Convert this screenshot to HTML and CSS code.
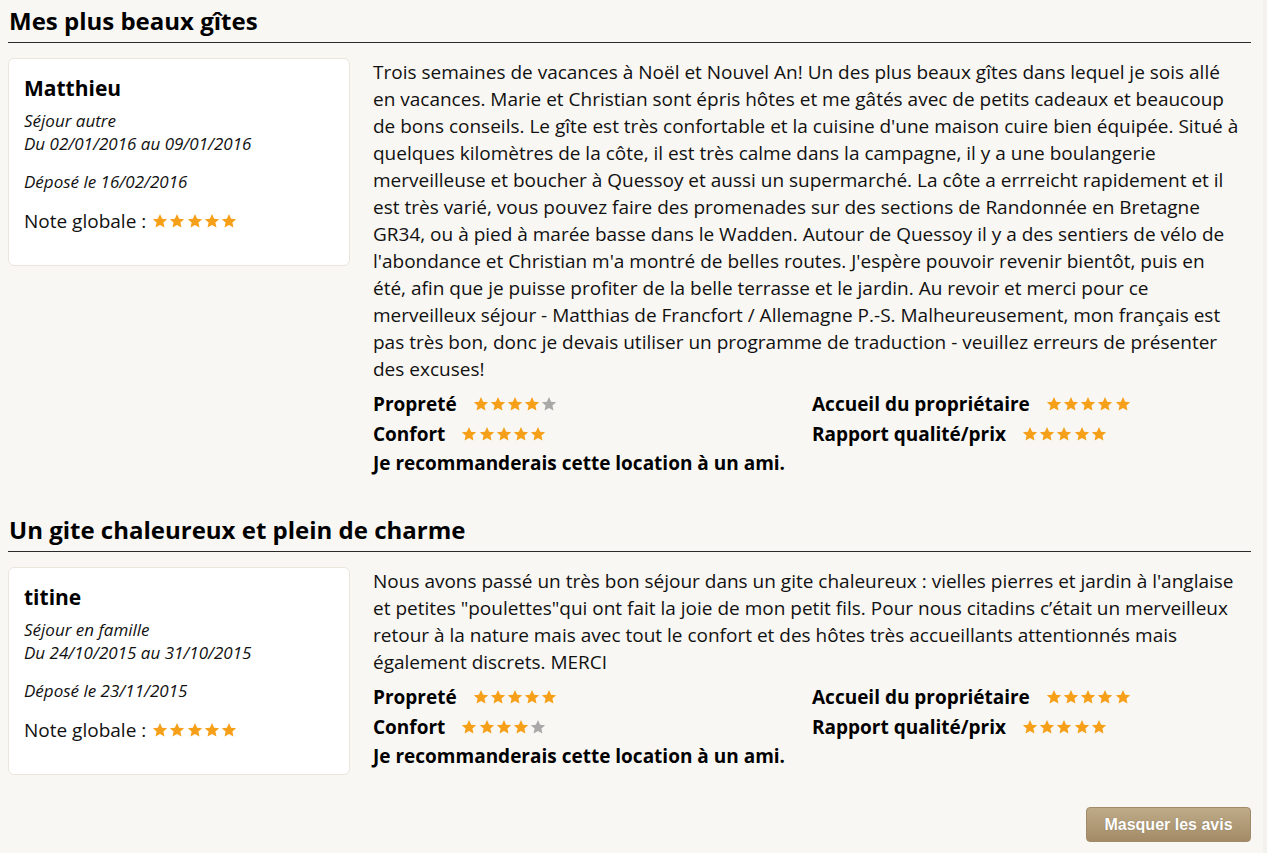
FILE: index.html
```html
<!DOCTYPE html>
<html lang="fr">
<head>
<meta charset="utf-8">
<title>Avis</title>
<link rel="stylesheet" href="styles.css">
</head>
<body>
<svg width="0" height="0" class="defs" aria-hidden="true">
  <defs>
    <symbol id="star" viewBox="0 0 24 24">
      <path d="M12 1.5l3.2 7 7.6.8-5.7 5.1 1.6 7.5L12 18l-6.7 3.9 1.6-7.5L1.2 9.3l7.6-.8z"/>
    </symbol>
  </defs>
</svg>
<main class="reviews">
  <section class="review">
    <h2 class="review-title">Mes plus beaux gîtes</h2>
    <div class="review-body">
      <aside class="author-card">
        <div class="author-name">Matthieu</div>
        <div class="stay">Séjour autre<br>Du 02/01/2016 au 09/01/2016</div>
        <div class="posted">Déposé le 16/02/2016</div>
        <div class="global">Note globale : <span class="stars"><svg class="star on"><use href="#star"/></svg><svg class="star on"><use href="#star"/></svg><svg class="star on"><use href="#star"/></svg><svg class="star on"><use href="#star"/></svg><svg class="star on"><use href="#star"/></svg></span></div>
      </aside>
      <div class="review-content">
        <p class="review-text">Trois semaines de vacances à Noël et Nouvel An! Un des plus beaux gîtes dans lequel je sois allé<br>en vacances. Marie et Christian sont épris hôtes et me gâtés avec de petits cadeaux et beaucoup<br>de bons conseils. Le gîte est très confortable et la cuisine d'une maison cuire bien équipée. Situé à<br>quelques kilomètres de la côte, il est très calme dans la campagne, il y a une boulangerie<br>merveilleuse et boucher à Quessoy et aussi un supermarché. La côte a errreicht rapidement et il<br>est très varié, vous pouvez faire des promenades sur des sections de Randonnée en Bretagne<br>GR34, ou à pied à marée basse dans le Wadden. Autour de Quessoy il y a des sentiers de vélo de<br>l'abondance et Christian m'a montré de belles routes. J'espère pouvoir revenir bientôt, puis en<br>été, afin que je puisse profiter de la belle terrasse et le jardin. Au revoir et merci pour ce<br>merveilleux séjour - Matthias de Francfort / Allemagne P.-S. Malheureusement, mon français est<br>pas très bon, donc je devais utiliser un programme de traduction - veuillez erreurs de présenter<br>des excuses!</p>
        <div class="ratings">
          <div class="rating"><span class="label">Propreté</span><span class="stars"><svg class="star on"><use href="#star"/></svg><svg class="star on"><use href="#star"/></svg><svg class="star on"><use href="#star"/></svg><svg class="star on"><use href="#star"/></svg><svg class="star off"><use href="#star"/></svg></span></div>
          <div class="rating"><span class="label">Accueil du propriétaire</span><span class="stars"><svg class="star on"><use href="#star"/></svg><svg class="star on"><use href="#star"/></svg><svg class="star on"><use href="#star"/></svg><svg class="star on"><use href="#star"/></svg><svg class="star on"><use href="#star"/></svg></span></div>
          <div class="rating"><span class="label">Confort</span><span class="stars"><svg class="star on"><use href="#star"/></svg><svg class="star on"><use href="#star"/></svg><svg class="star on"><use href="#star"/></svg><svg class="star on"><use href="#star"/></svg><svg class="star on"><use href="#star"/></svg></span></div>
          <div class="rating"><span class="label">Rapport qualité/prix</span><span class="stars"><svg class="star on"><use href="#star"/></svg><svg class="star on"><use href="#star"/></svg><svg class="star on"><use href="#star"/></svg><svg class="star on"><use href="#star"/></svg><svg class="star on"><use href="#star"/></svg></span></div>
          <div class="recommend">Je recommanderais cette location à un ami.</div>
        </div>
      </div>
    </div>
  </section>

  <section class="review">
    <h2 class="review-title">Un gite chaleureux et plein de charme</h2>
    <div class="review-body">
      <aside class="author-card">
        <div class="author-name">titine</div>
        <div class="stay">Séjour en famille<br>Du 24/10/2015 au 31/10/2015</div>
        <div class="posted">Déposé le 23/11/2015</div>
        <div class="global">Note globale : <span class="stars"><svg class="star on"><use href="#star"/></svg><svg class="star on"><use href="#star"/></svg><svg class="star on"><use href="#star"/></svg><svg class="star on"><use href="#star"/></svg><svg class="star on"><use href="#star"/></svg></span></div>
      </aside>
      <div class="review-content">
        <p class="review-text">Nous avons passé un très bon séjour dans un gite chaleureux : vielles pierres et jardin à l'anglaise<br>et petites "poulettes"qui ont fait la joie de mon petit fils. Pour nous citadins c’était un merveilleux<br>retour à la nature mais avec tout le confort et des hôtes très accueillants attentionnés mais<br>également discrets. MERCI</p>
        <div class="ratings">
          <div class="rating"><span class="label">Propreté</span><span class="stars"><svg class="star on"><use href="#star"/></svg><svg class="star on"><use href="#star"/></svg><svg class="star on"><use href="#star"/></svg><svg class="star on"><use href="#star"/></svg><svg class="star on"><use href="#star"/></svg></span></div>
          <div class="rating"><span class="label">Accueil du propriétaire</span><span class="stars"><svg class="star on"><use href="#star"/></svg><svg class="star on"><use href="#star"/></svg><svg class="star on"><use href="#star"/></svg><svg class="star on"><use href="#star"/></svg><svg class="star on"><use href="#star"/></svg></span></div>
          <div class="rating"><span class="label">Confort</span><span class="stars"><svg class="star on"><use href="#star"/></svg><svg class="star on"><use href="#star"/></svg><svg class="star on"><use href="#star"/></svg><svg class="star on"><use href="#star"/></svg><svg class="star off"><use href="#star"/></svg></span></div>
          <div class="rating"><span class="label">Rapport qualité/prix</span><span class="stars"><svg class="star on"><use href="#star"/></svg><svg class="star on"><use href="#star"/></svg><svg class="star on"><use href="#star"/></svg><svg class="star on"><use href="#star"/></svg><svg class="star on"><use href="#star"/></svg></span></div>
          <div class="recommend">Je recommanderais cette location à un ami.</div>
        </div>
      </div>
    </div>
  </section>

  <div class="actions">
    <button class="btn-hide" type="button">Masquer les avis</button>
  </div>
</main>
</body>
</html>
```

FILE: styles.css
```css
html {
  background: #f9f7f3;
}
body {
  margin: 0;
  padding: 0 16px 0 8px;
  font-family: "Open Sans", "DejaVu Sans", sans-serif;
  color: #111;
  background: #f9f7f3;
  box-shadow: inset -4px 0 0 #f4f2ee;
  min-height: 853px;
  box-sizing: border-box;
}
.defs {
  position: absolute;
  width: 0;
  height: 0;
}
.reviews {
  display: flex;
  flex-direction: column;
}
.review {
  padding-top: 6px;
  margin-bottom: 31px;
}
.review:last-of-type {
  margin-bottom: 0;
}
.review-title {
  margin: 0;
  font-size: 24px;
  line-height: 30px;
  font-weight: 700;
  padding: 0 0 6px 1px;
  border-bottom: 1px solid #2a2a2a;
  color: #000;
}
.review-body {
  display: grid;
  grid-template-columns: 342px 1fr;
  column-gap: 23px;
  margin-top: 15px;
  align-items: start;
}
.author-card {
  background: #fff;
  border: 1px solid #ebe6dc;
  border-radius: 6px;
  padding: 15px 15px 0 15px;
  height: 208px;
  box-sizing: border-box;
}
.author-name {
  font-size: 21px;
  font-weight: 700;
  line-height: 28px;
  color: #000;
}
.stay {
  margin-top: 7px;
  font-style: italic;
  font-size: 17px;
  line-height: 23px;
}
.posted {
  margin-top: 15px;
  font-style: italic;
  font-size: 17px;
  line-height: 23px;
}
.global {
  margin-top: 15px;
  font-size: 19px;
  line-height: 26px;
  display: flex;
  align-items: center;
  gap: 6px;
}
.stars {
  display: inline-flex;
  align-items: center;
  gap: 1.2px;
}
.star {
  width: 16px;
  height: 16px;
}
.star.on {
  fill: #f6a01a;
}
.star.off {
  fill: #a9a9a9;
}
.review-content {
  padding-top: 1px;
}
.review-text {
  margin: 0;
  font-size: 19px;
  line-height: 27px;
  color: #111;
}
.ratings {
  margin-top: 6px;
  display: grid;
  grid-template-columns: 1fr 1fr;
}
.rating {
  display: flex;
  align-items: center;
  gap: 16px;
  height: 30px;
}
.label,
.recommend {
  font-size: 19px;
  font-weight: 700;
  color: #000;
}
.recommend {
  grid-column: 1 / -1;
  line-height: 29px;
}
.actions {
  display: flex;
  justify-content: flex-end;
  padding-top: 32px;
}
.btn-hide {
  width: 165px;
  height: 35px;
  font-family: "Liberation Sans", Arial, sans-serif;
  font-size: 16px;
  font-weight: 700;
  color: #fff;
  background: linear-gradient(#bfab89, #a38b66);
  border: 1px solid #a08a68;
  border-radius: 4px;
  text-shadow: 0 0 1px rgba(0,0,0,0.25);
  cursor: pointer;
}
```
